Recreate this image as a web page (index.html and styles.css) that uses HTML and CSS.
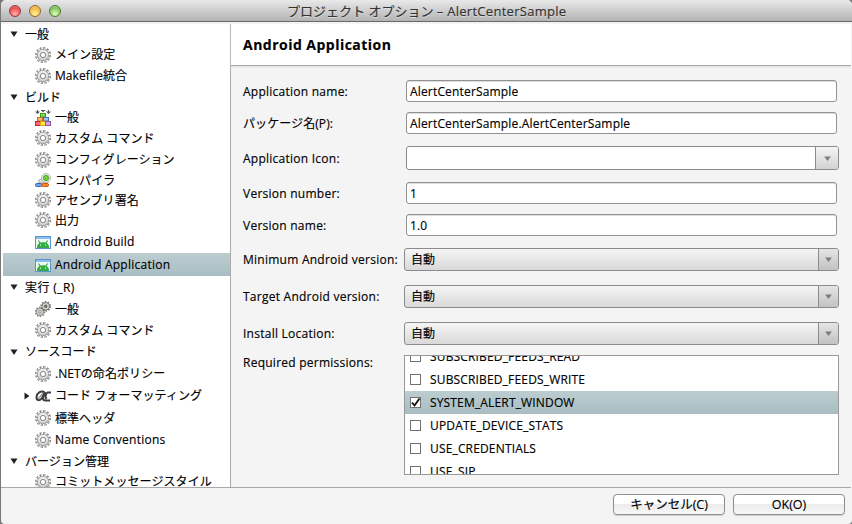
FILE: index.html
```html
<!DOCTYPE html>
<html lang="ja">
<head>
<meta charset="utf-8">
<title>プロジェクト オプション – AlertCenterSample</title>
<link rel="stylesheet" href="styles.css">
</head>
<body>
<svg class="defs" aria-hidden="true">
  <defs>
    <linearGradient id="metal" x1="0" y1="0" x2="0" y2="1"><stop offset="0" stop-color="#f2f2f2"/><stop offset="1" stop-color="#cecece"/></linearGradient>
    <symbol id="gear" viewBox="0 0 16 16">
      <circle cx="8" cy="8" r="6.8" fill="none" stroke="#7d7d7d" stroke-width="2.4" stroke-dasharray="2.1 1.46"/>
      <circle cx="8" cy="8" r="5.7" fill="url(#metal)" stroke="#8f8f8f" stroke-width=".9"/>
      <circle cx="8" cy="8" r="6.4" fill="none" stroke="#dedede" stroke-width="1.7" stroke-dasharray=".9 2.451" stroke-dashoffset="-.5"/>
      <circle cx="8" cy="8" r="2.6" fill="#fff" stroke="#858585" stroke-width="1"/>
    </symbol>
    <symbol id="gears" viewBox="0 0 16 16">
      <g fill="#d2d2cb" stroke="#85857f" stroke-width=".9"><circle cx="5" cy="10.800" r="4.500" fill="none" stroke-width="1.700" stroke-dasharray="1.400 1.427"/><circle cx="5" cy="10.800" r="3.800"/><circle cx="5" cy="10.800" r="1.300" fill="#fff"/>
      <circle cx="10.700" cy="5.300" r="4.500" fill="none" stroke="#6f6f69" stroke-width="1.700" stroke-dasharray="1.400 1.427"/><circle cx="10.700" cy="5.300" r="3.800" stroke="#6f6f69"/><circle cx="10.700" cy="5.300" r="1.200" fill="#777" stroke="#555"/></g>
    </symbol>
    <symbol id="blocks" viewBox="0 0 16 16">
      <path d="M2.500 0v3M13.500 0v3M6 .5h4" stroke="#555" fill="none"/>
      <path d="M0 1.500h5L2.500 4zM11 1.500h5L13.500 4zM6 0h4L8 2.500z" fill="#555"/>
      <rect x="5.500" y="3.500" width="5" height="3.500" fill="#7be04e" stroke="#3c9c1c"/>
      <rect x="2.500" y="7.500" width="5" height="3.500" fill="#f9b27a" stroke="#d8691d"/>
      <rect x="8.500" y="7.500" width="5" height="3.500" fill="#9fc3f5" stroke="#3e73c4"/>
      <rect x=".5" y="11.500" width="5" height="4" fill="#f56b76" stroke="#cb1a2f"/>
      <rect x="5.500" y="11.500" width="5" height="4" fill="#ffe44c" stroke="#d3a514"/>
      <rect x="10.500" y="11.500" width="5" height="4" fill="#cfa5dc" stroke="#9355a6"/>
    </symbol>
    <symbol id="compiler" viewBox="0 0 16 16">
      <rect x="3.500" y="7.500" width="10" height="3.500" rx="1.700" fill="#ddd" stroke="#aaa"/>
      <circle cx="11" cy="6" r="4.400" fill="#f0f0ee" stroke="#b2b2b2"/><circle cx="11" cy="6" r="2.600" fill="#6dd03b" stroke="#4da627"/>
      <rect x=".5" y="11.500" width="6.500" height="3" rx="1.300" fill="#7ba5e8" stroke="#3465a4"/>
      <rect x="7" y="11.500" width="6.500" height="3" rx="1.300" fill="#ff8a32" stroke="#cf540d"/>
    </symbol>
    <symbol id="android" viewBox="0 0 16 16">
      <rect x=".5" y="2.500" width="15" height="12" fill="#eefaf0" stroke="#5a93cd"/>
      <path d="M1 3h14v2H1z" fill="#8bbef2"/>
      <path d="M2 14v-1.500C2.400 9.800 4.800 8.300 8 8.300s5.600 1.500 6 4.200V14z" fill="#33ad42"/>
      <path d="M3.300 6.500l2 2.700M12.700 6.500l-2 2.700" stroke="#33ad42" stroke-width="1.100"/>
      <path d="M5.500 10.500v1.200M10.500 10.500v1.200" stroke="#e4ffe0"/>
    </symbol>
    <symbol id="format" viewBox="0 0 16 16">
      <path d="M9.500 4C5.500 2.500 2 5 1.500 9c-.2 4 3.500 4 5.500 1l3-6-2 6c0 2 1 2.500 2.500 2.500H15M15.500 4.500h-3C10.500 6 10 9 11.500 11M12 4.500h4" fill="none" stroke="#3c3e40" stroke-width="2"/>
      <path d="M3 11l5-6" stroke="#74777a" stroke-width="1.100"/>
    </symbol>
    <symbol id="down" viewBox="0 0 8 6"><path d="M.5.5h7L4 6z" fill="#222"/></symbol>
    <symbol id="right" viewBox="0 0 6 8"><path d="M.5.5v7L5.500 4z" fill="#222"/></symbol>
    <symbol id="drop" viewBox="0 0 7 5"><path d="M.2.500h6.600L3.500 5z" fill="#7c7c7c"/></symbol>
  </defs>
</svg>
<div class="window">
  <header class="titlebar">
    <div class="lights"><i class="light red"></i><i class="light yellow"></i><i class="light green"></i></div>
    <h1 class="title">プロジェクト オプション <span class="title-name">– AlertCenterSample</span></h1>
  </header>
  <div class="body">
    <nav class="tree">
      <div class="row group h20"><svg class="arrow"><use href="#down"/></svg><span class="ja">一般</span></div>
      <div class="row h21"><svg class="icon"><use href="#gear"/></svg><span class="ja">メイン設定</span></div>
      <div class="row h21"><svg class="icon"><use href="#gear"/></svg><span class="mixed">Makefile統合</span></div>
      <div class="row group h22"><svg class="arrow"><use href="#down"/></svg><span class="ja">ビルド</span></div>
      <div class="row h19"><svg class="icon"><use href="#blocks"/></svg><span class="ja">一般</span></div>
      <div class="row h22"><svg class="icon"><use href="#gear"/></svg><span class="ja">カスタム コマンド</span></div>
      <div class="row h21"><svg class="icon"><use href="#gear"/></svg><span class="ja">コンフィグレーション</span></div>
      <div class="row h20"><svg class="icon"><use href="#compiler"/></svg><span class="ja">コンパイラ</span></div>
      <div class="row h20"><svg class="icon"><use href="#gear"/></svg><span class="ja">アセンブリ署名</span></div>
      <div class="row h20"><svg class="icon"><use href="#gear"/></svg><span class="ja">出力</span></div>
      <div class="row h23"><svg class="icon"><use href="#android"/></svg><span>Android Build</span></div>
      <div class="row h23 selected"><svg class="icon"><use href="#android"/></svg><span>Android Application</span></div>
      <div class="row group h22"><svg class="arrow"><use href="#down"/></svg><span class="ja wide">実行 (_R)</span></div>
      <div class="row h22"><svg class="icon"><use href="#gears"/></svg><span class="ja">一般</span></div>
      <div class="row h20"><svg class="icon"><use href="#gear"/></svg><span class="ja">カスタム コマンド</span></div>
      <div class="row group h23"><svg class="arrow"><use href="#down"/></svg><span class="ja">ソースコード</span></div>
      <div class="row h21"><svg class="icon"><use href="#gear"/></svg><span class="mixed">.NETの命名ポリシー</span></div>
      <div class="row nested h23"><svg class="arrow-right"><use href="#right"/></svg><svg class="icon"><use href="#format"/></svg><span class="ja">コード フォーマッティング</span></div>
      <div class="row h22"><svg class="icon"><use href="#gear"/></svg><span class="ja">標準ヘッダ</span></div>
      <div class="row h22"><svg class="icon"><use href="#gear"/></svg><span>Name Conventions</span></div>
      <div class="row group h20"><svg class="arrow"><use href="#down"/></svg><span class="ja">バージョン管理</span></div>
      <div class="row h21"><svg class="icon"><use href="#gear"/></svg><span class="mixed">コミットメッセージスタイル</span></div>
    </nav>
    <main class="panel">
      <h2 class="heading">Android Application</h2>
      <form class="form">
        <div class="field"><label class="low">Application name:</label><div class="input">AlertCenterSample</div></div>
        <div class="field gap10"><label class="low mixed">パッケージ名(P):</label><div class="input">AlertCenterSample.AlertCenterSample</div></div>
        <div class="field gap12"><label class="low">Application Icon:</label><div class="combo editable"><span class="value"></span><span class="drop"><svg><use href="#drop"/></svg></span></div></div>
        <div class="field gap12"><label class="low">Version number:</label><div class="input">1</div></div>
        <div class="field gap10"><label class="low">Version name:</label><div class="input">1.0</div></div>
        <div class="field gap12"><label>Minimum Android version:</label><div class="combo"><span class="value">自動</span><span class="drop"><svg><use href="#drop"/></svg></span></div></div>
        <div class="field gap14"><label>Target Android version:</label><div class="combo"><span class="value">自動</span><span class="drop"><svg><use href="#drop"/></svg></span></div></div>
        <div class="field gap14"><label>Install Location:</label><div class="combo"><span class="value">自動</span><span class="drop"><svg><use href="#drop"/></svg></span></div></div>
        <div class="field gap10 top"><label>Required permissions:</label>
          <div class="list">
            <div class="perm"><i class="check"></i><span>SUBSCRIBED_FEEDS_READ</span></div>
            <div class="perm"><i class="check"></i><span>SUBSCRIBED_FEEDS_WRITE</span></div>
            <div class="perm selected"><i class="check"><svg viewBox="0 0 11 11"><path d="M2 5.500l2.500 3L9.500 1.500" fill="none" stroke="#111" stroke-width="1.900"/></svg></i><span>SYSTEM_ALERT_WINDOW</span></div>
            <div class="perm"><i class="check"></i><span>UPDATE_DEVICE_STATS</span></div>
            <div class="perm"><i class="check"></i><span>USE_CREDENTIALS</span></div>
            <div class="perm"><i class="check"></i><span>USE_SIP</span></div>
          </div>
        </div>
      </form>
    </main>
  </div>
  <footer class="footer">
    <button class="button">キャンセル(C)</button>
    <button class="button">OK(O)</button>
  </footer>
</div>
</body>
</html>
```
FILE: styles.css
```css
* { box-sizing: border-box; }
body {
  margin: 0;
  width: 852px;
  height: 524px;
  overflow: hidden;
  background: #777;
  color: #000;
  font: 12px/16px "Open Sans", "Noto Sans CJK JP", sans-serif;
  letter-spacing: .25px;
  -webkit-text-stroke: .15px currentColor;
}
.defs { position: absolute; width: 0; height: 0; }
.window {
  display: flex;
  flex-direction: column;
  height: 524px;
  margin-left: 1px;
  background: #f4f4f4;
  border-radius: 5px 5px 4px 4px;
  overflow: hidden;
}
.titlebar {
  display: flex;
  align-items: center;
  height: 22px;
  padding-left: 8px;
  background: linear-gradient(#e9e9e9, #b3b3b3);
  border-bottom: 1px solid #686868;
}
.lights { display: flex; gap: 8px; width: 278px; }
.light { width: 12px; height: 12px; border-radius: 50%; border: 1px solid; }
.red { background: radial-gradient(circle at 50% 80%, #ffb0ac, #ec4f55 65%, #e89090); border-color: #99393c; }
.yellow { background: radial-gradient(circle at 50% 80%, #fff1a0, #f2b748 65%, #f8d58d); border-color: #94672b; }
.green { background: radial-gradient(circle at 50% 80%, #e0ffb5, #83c461 65%, #b7dfa0); border-color: #477b36; }
.title { margin: 0; font-size: 13px; font-weight: 400; line-height: 20px; letter-spacing: 0; color: #333; white-space: nowrap; text-shadow: 0 1px #dcdcdc; }
.title-name { letter-spacing: .28px; }
.body { display: flex; height: 464px; margin: 2px 1px 0 0; border-bottom: 1px solid #a9a9a9; overflow: hidden; }
.tree { width: 230px; flex: none; padding-left: 2px; background: #fff; border-right: 1px solid #a9a9a9; overflow: hidden; }
.row { display: flex; align-items: center; gap: 4px; padding-left: 32px; white-space: nowrap; }
.row.group { padding-left: 7px; gap: 7px; }
.row.nested { padding-left: 21px; }
.row.nested .arrow-right { margin-right: 1px; }
.h19 { height: 19px; } .h20 { height: 20px; } .h21 { height: 21px; } .h22 { height: 22px; } .h23 { height: 23px; }
.ja { padding-top: 1px; letter-spacing: .05px; }
.mixed { letter-spacing: .08px; }
.wide { letter-spacing: .4px; }
.icon { width: 16px; height: 16px; flex: none; }
.arrow { width: 8px; height: 6px; flex: none; }
.arrow-right { width: 6px; height: 8px; flex: none; }
.selected { background: linear-gradient(#bccdd1, #a8bdc2); }
.panel { flex: 1; min-width: 0; }
.heading {
  display: flex;
  align-items: center;
  height: 42px;
  margin: 0;
  padding-left: 12px;
  background: #fff;
  border-bottom: 1px solid #a9a9a9;
  box-shadow: 0 1px 2px #ddd;
  font-size: 14px;
  font-weight: 700;
  letter-spacing: .48px;
}
.form { padding: 14px 12px 0; }
.field { display: flex; align-items: center; }
.field.top { align-items: flex-start; }
.field label { width: 161px; flex: none; white-space: nowrap; }
.field .low { padding-top: 2px; }
.gap10 { margin-top: 10px; } .gap12 { margin-top: 12px; } .gap14 { margin-top: 14px; }
.input { flex: 1; height: 22px; margin: 0 2px; padding: 1px 0 0 3px; line-height: 20px; letter-spacing: .17px; background: #fff; border: 1px solid #919191; border-radius: 3px; box-shadow: inset 0 1px #ddd; }
.combo { display: flex; flex: 1; height: 23px; border: 1px solid #8b8b8b; border-radius: 3px; background: linear-gradient(#f5f5f5, #d9d9d9); overflow: hidden; }
.combo.editable { height: 24px; margin-left: 2px; background: #fff; }
.combo .value { flex: 1; padding-left: 6px; line-height: 21px; letter-spacing: 0; }
.drop { display: flex; align-items: center; justify-content: center; width: 20px; border-left: 1px solid #8b8b8b; background: linear-gradient(#e5e5e5, #c2c2c2); }
.editable .drop { width: 23px; background: linear-gradient(#f5f5f5, #d2d2d2); }
.drop svg { width: 7px; height: 5px; }
.list { flex: 1; height: 120px; border: 1px solid #999; background: #fff; overflow: hidden; letter-spacing: .16px; }
.perm { display: flex; align-items: center; height: 23px; padding-left: 5px; gap: 9px; }
.perm:first-child { margin-top: -11px; }
.check { width: 11px; height: 11px; background: #fff; border: 1px solid #717171; }
.check svg { display: block; width: 11px; height: 11px; margin: -1px; }
.footer { display: flex; justify-content: flex-end; gap: 8px; padding: 6px 7px 0; }
.button { width: 112px; height: 21px; padding: 0; border: 1px solid #909090; border-radius: 4px; background: linear-gradient(#fff 45%, #ececec 50%, #f7f7f7); box-shadow: 0 1px 1px #ccc; color: #000; font: inherit; font-size: 12.5px; line-height: 18px; }
```
